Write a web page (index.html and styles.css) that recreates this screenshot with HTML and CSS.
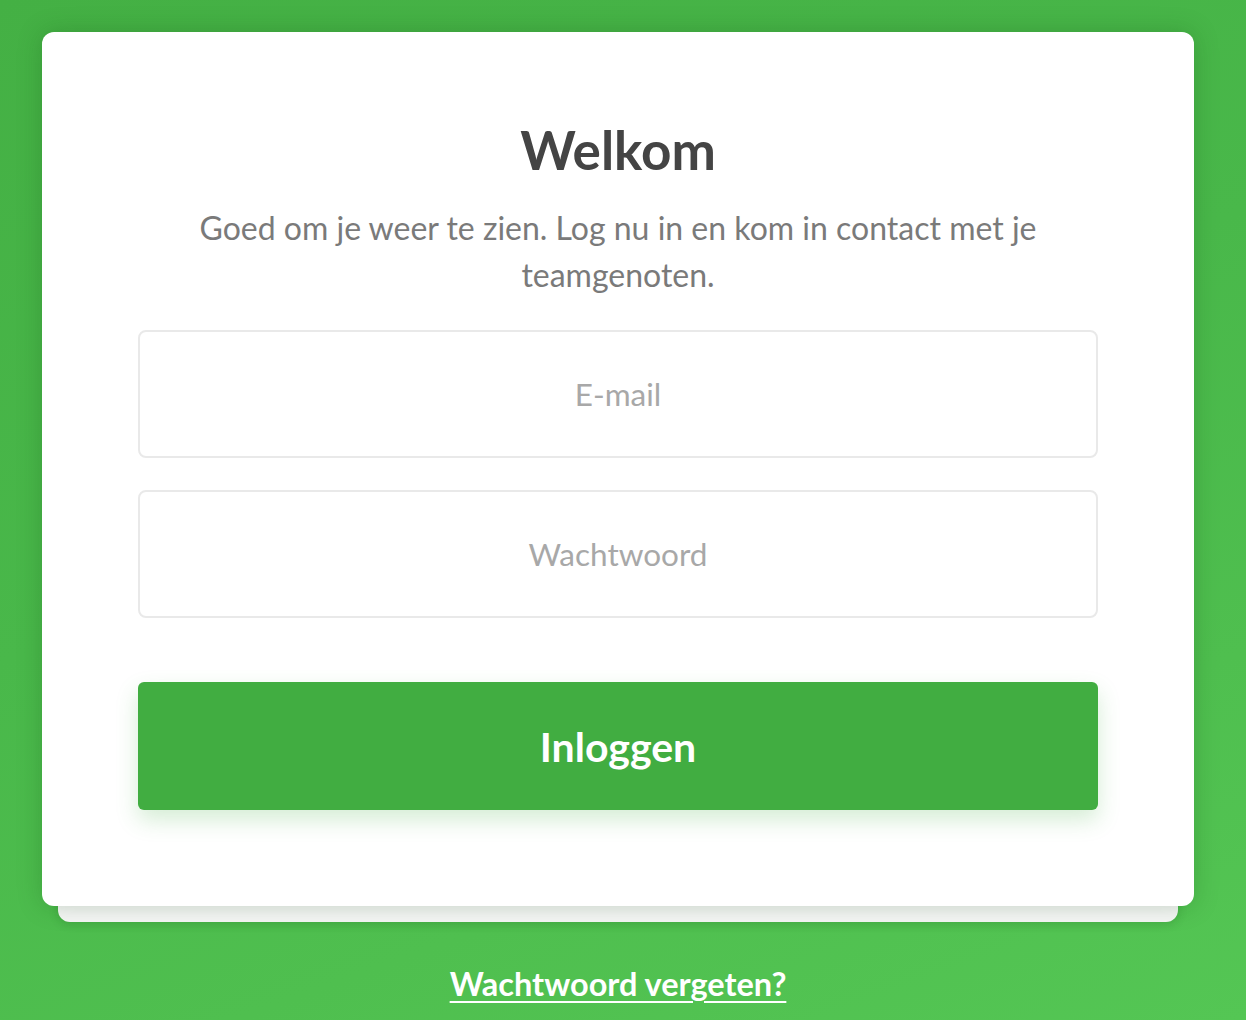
FILE: index.html
```html
<!DOCTYPE html>
<html lang="nl">
<head>
<meta charset="utf-8">
<title>Inloggen</title>
<link rel="stylesheet" href="styles.css">
</head>
<body>
<main class="page">
  <div class="stack">
    <section class="card">
      <h1 class="title">Welkom</h1>
      <p class="subtitle">Goed om je weer te zien. Log nu in en kom in contact met je teamgenoten.</p>
      <form class="form">
        <input class="field" type="email" placeholder="E-mail">
        <input class="field" type="password" placeholder="Wachtwoord">
        <button class="btn" type="button">Inloggen</button>
      </form>
    </section>
    <div class="card-under"></div>
  </div>
  <a class="forgot" href="#">Wachtwoord vergeten?</a>
</main>
</body>
</html>
```

FILE: styles.css
```css
* { box-sizing: border-box; }
html, body { margin: 0; padding: 0; }
body {
  width: 1246px;
  height: 1020px;
  overflow: hidden;
  font-family: Lato, "Open Sans", sans-serif;
  background: linear-gradient(160deg, #44b044 0%, #49b84a 45%, #4fbf4f 75%, #54c654 100%);
}
.page {
  display: flex;
  flex-direction: column;
  align-items: center;
  padding: 32px 10px 0 0;
}
.stack {
  width: 1152px;
  display: flex;
  flex-direction: column;
  align-items: center;
}
.card {
  width: 1152px;
  height: 874px;
  background: #fff;
  border-radius: 12px;
  padding: 86px 96px 0;
  box-shadow: 0 0 24px rgba(20, 80, 20, 0.25);
  position: relative;
  z-index: 2;
  display: flex;
  flex-direction: column;
  align-items: center;
}
.card-under {
  width: 1120px;
  height: 28px;
  margin-top: -12px;
  background: #f7f7f7;
  border-radius: 0 0 12px 12px;
  box-shadow: 0 2px 10px rgba(20, 80, 20, 0.2);
  position: relative;
  z-index: 1;
}
.title {
  margin: 0;
  font-size: 53px;
  line-height: 64px;
  font-weight: 700;
  color: #444;
}
.subtitle {
  margin: 22px 0 0;
  font-size: 32px;
  line-height: 47px;
  font-weight: 400;
  color: #7a7a7a;
  text-align: center;
  max-width: 900px;
}
.form {
  width: 960px;
  margin-top: 32px;
  display: flex;
  flex-direction: column;
}
.field {
  height: 128px;
  border: 2px solid #e9e9e9;
  border-radius: 8px;
  font-family: inherit;
  font-size: 31.5px;
  font-weight: 400;
  text-align: center;
  color: #444;
  margin-bottom: 32px;
  outline: none;
}
.field::placeholder { color: #a8a8a8; }
.btn {
  height: 128px;
  margin-top: 32px;
  border: 0;
  border-radius: 6px;
  background: #41ad41;
  color: #fff;
  font-family: inherit;
  font-size: 41px;
  font-weight: 700;
  box-shadow: 0 10px 22px rgba(65, 173, 65, 0.22);
}
.forgot {
  margin-top: 42px;
  font-size: 32.5px;
  font-weight: 700;
  color: #fff;
  text-decoration: underline;
  text-decoration-thickness: 2px;
  text-underline-offset: 5px;
}
```
